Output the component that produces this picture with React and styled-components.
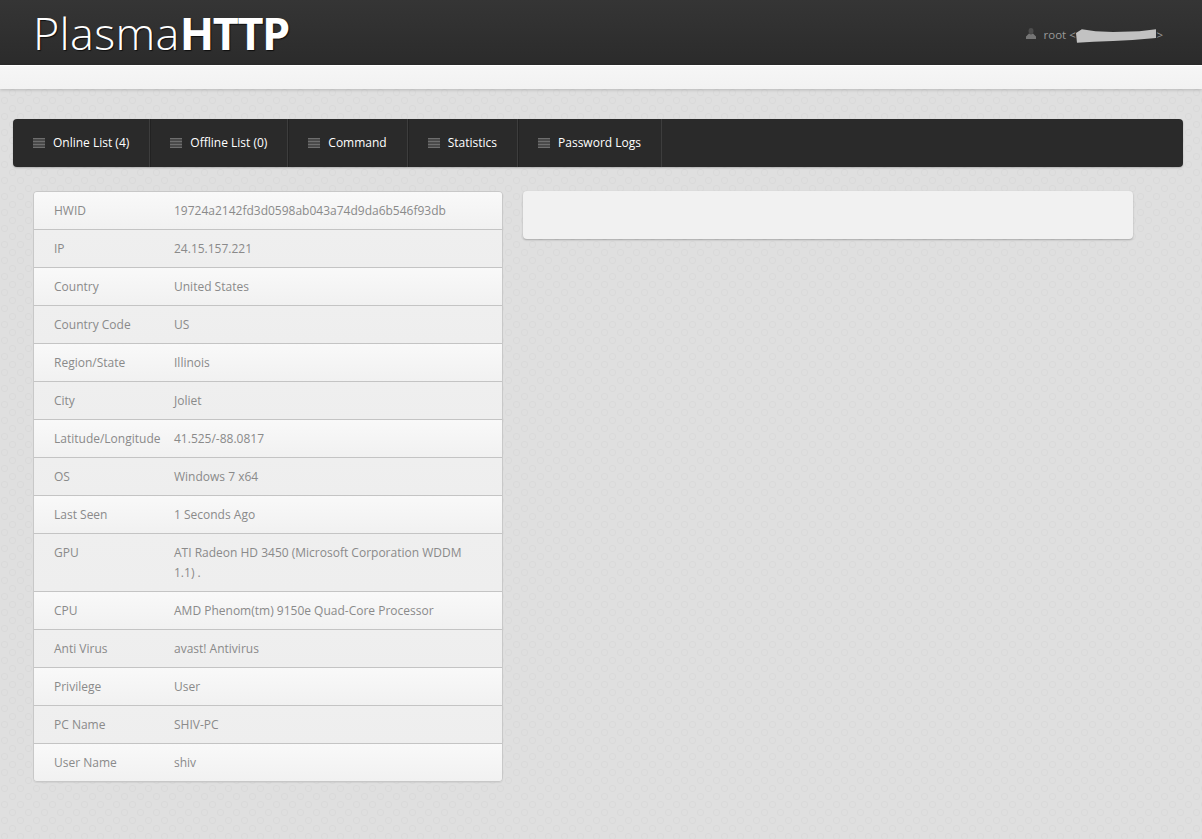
import React from "react";
import styled, { createGlobalStyle } from "styled-components";

const dotPattern = encodeURIComponent(
  `<svg xmlns="http://www.w3.org/2000/svg" width="16" height="16"><g fill="#dfdfdf" stroke="#d9d9d9" stroke-width="1"><rect x="1.5" y="1.5" width="6" height="6" rx="2.5"/><rect x="9.5" y="9.5" width="6" height="6" rx="2.5"/></g></svg>`
);

const GlobalStyle = createGlobalStyle`
  html, body {
    margin: 0;
    padding: 0;
  }
  body {
    height: 839px;
    overflow: hidden;
    font-family: "Open Sans", sans-serif;
    font-size: 12px;
    background-color: #dfdfdf;
    background-image: url("data:image/svg+xml,${dotPattern}");
  }
`;

const Header = styled.header`
  height: 65px;
  box-sizing: border-box;
  display: flex;
  align-items: center;
  justify-content: space-between;
  padding: 0 39px 0 33px;
  background: linear-gradient(to bottom, #353535, #2b2b2b);
`;

const Logo = styled.h1`
  margin: 0;
  font-size: 45px;
  line-height: 65px;
  font-weight: 300;
  letter-spacing: 0.3px;
  color: #fff;
  text-shadow: 1px 1px 1px rgba(0, 0, 0, 0.7);

  b {
    font-weight: 700;
    letter-spacing: -1.4px;
  }
`;

const UserInfo = styled.div`
  position: relative;
  display: flex;
  align-items: center;
  gap: 8px;
  margin-top: 4px;
  color: #999;
  font-size: 11.5px;
`;

const UserGlyph = styled.svg`
  display: block;
  width: 10px;
  height: 11px;
  margin-top: -2px;
  flex: none;
`;

const Redaction = styled.svg`
  position: absolute;
  left: 50px;
  top: 2px;
  width: 80px;
  height: 15px;
`;

const SubHeader = styled.div`
  height: 24px;
  background: linear-gradient(to bottom, #f6f6f6, #f2f2f2);
  border-top: 1px solid #fff;
  box-sizing: border-box;
  box-shadow: 0 1px 3px rgba(0, 0, 0, 0.18);
`;

const Nav = styled.nav`
  display: flex;
  height: 48px;
  margin: 30px 19px 0 13px;
  background: #2a2a2a;
  border-radius: 4px;
  box-shadow: 0 1px 2px rgba(0, 0, 0, 0.2);
`;

const NavItem = styled.a`
  display: flex;
  align-items: center;
  gap: 8px;
  padding: 0 20px 2px;
  color: #fff;
  font-size: 12px;
  border-right: 1px solid #3d3d3d;
  box-shadow: 1px 0 0 #222 inset;

  &:first-child {
    box-shadow: none;
  }
`;

const MenuIcon = styled.svg`
  display: block;
  width: 12px;
  height: 10px;
  flex: none;
  margin-top: 1px;
`;

const Content = styled.main`
  display: flex;
  align-items: flex-start;
  gap: 20px;
  margin: 24px 0 0 33px;
`;

const InfoTable = styled.div`
  width: 470px;
  box-sizing: border-box;
  border: 1px solid #c8c8c8;
  border-radius: 4px;
  overflow: hidden;
  box-shadow: 0 1px 1px rgba(0, 0, 0, 0.06);
`;

const Row = styled.div`
  display: flex;
  box-sizing: border-box;
  padding: 9px 20px 8px;
  line-height: 20px;
  color: #8a8a8a;
  background: ${(p) =>
    p.$odd
      ? "linear-gradient(to bottom, #f9f9f9, #f1f1f1)"
      : "linear-gradient(to bottom, #efefef, #eeeeee)"};
  border-bottom: 1px solid #c4c4c4;

  &:last-child {
    border-bottom: 0;
  }
`;

const Label = styled.div`
  flex: none;
  width: 120px;
`;

const Value = styled.div`
  flex: 1;
  min-width: 0;
`;

const EmptyPanel = styled.div`
  width: 610px;
  height: 48px;
  background: #f1f1f1;
  border-radius: 4px;
  box-shadow: 0 1px 2px rgba(0, 0, 0, 0.25);
`;

const menuItems = [
  "Online List (4)",
  "Offline List (0)",
  "Command",
  "Statistics",
  "Password Logs",
];

const details = [
  ["HWID", "19724a2142fd3d0598ab043a74d9da6b546f93db"],
  ["IP", "24.15.157.221"],
  ["Country", "United States"],
  ["Country Code", "US"],
  ["Region/State", "Illinois"],
  ["City", "Joliet"],
  ["Latitude/Longitude", "41.525/-88.0817"],
  ["OS", "Windows 7 x64"],
  ["Last Seen", "1 Seconds Ago"],
  ["GPU", "ATI Radeon HD 3450 (Microsoft Corporation WDDM 1.1) ."],
  ["CPU", "AMD Phenom(tm) 9150e Quad-Core Processor"],
  ["Anti Virus", "avast! Antivirus"],
  ["Privilege", "User"],
  ["PC Name", "SHIV-PC"],
  ["User Name", "shiv"],
];

function Bars() {
  return (
    <MenuIcon viewBox="0 0 12 10">
      <rect width="12" height="10" fill="#4a4a4a" />
      <path d="M0 .5h12M0 3.500h12M0 6.500h12M0 9.500h12" stroke="#6e6e6e" strokeWidth="1" />
    </MenuIcon>
  );
}

function UserIcon() {
  return (
    <UserGlyph viewBox="0 0 10 11">
      <ellipse cx="5" cy="3" rx="2.500" ry="3" fill="#4d4d4d" />
      <path d="M0 11V8.500L3 5.500 5 6.500 7 5.500 10 8.500V11z" fill="#757575" />
    </UserGlyph>
  );
}

export default function App() {
  return (
    <>
      <GlobalStyle />
      <Header>
        <Logo>
          Plasma<b>HTTP</b>
        </Logo>
        <UserInfo>
          <UserIcon />
          <span>root &lt;{"\u00a0".repeat(27)}&gt;</span>
          <Redaction viewBox="0 0 82 15">
            <path d="M0 4L6 0 20 2 38 3 65 2 82 0 82 9 58 11 38 12 18 13 1 14z" fill="#c2c2c2" />
          </Redaction>
        </UserInfo>
      </Header>
      <SubHeader />
      <Nav>
        {menuItems.map((item) => (
          <NavItem key={item}>
            <Bars />
            {item}
          </NavItem>
        ))}
      </Nav>
      <Content>
        <InfoTable>
          {details.map(([label, value], i) => (
            <Row key={label} $odd={i % 2 === 0}>
              <Label>{label}</Label>
              <Value>{value}</Value>
            </Row>
          ))}
        </InfoTable>
        <EmptyPanel />
      </Content>
    </>
  );
}
